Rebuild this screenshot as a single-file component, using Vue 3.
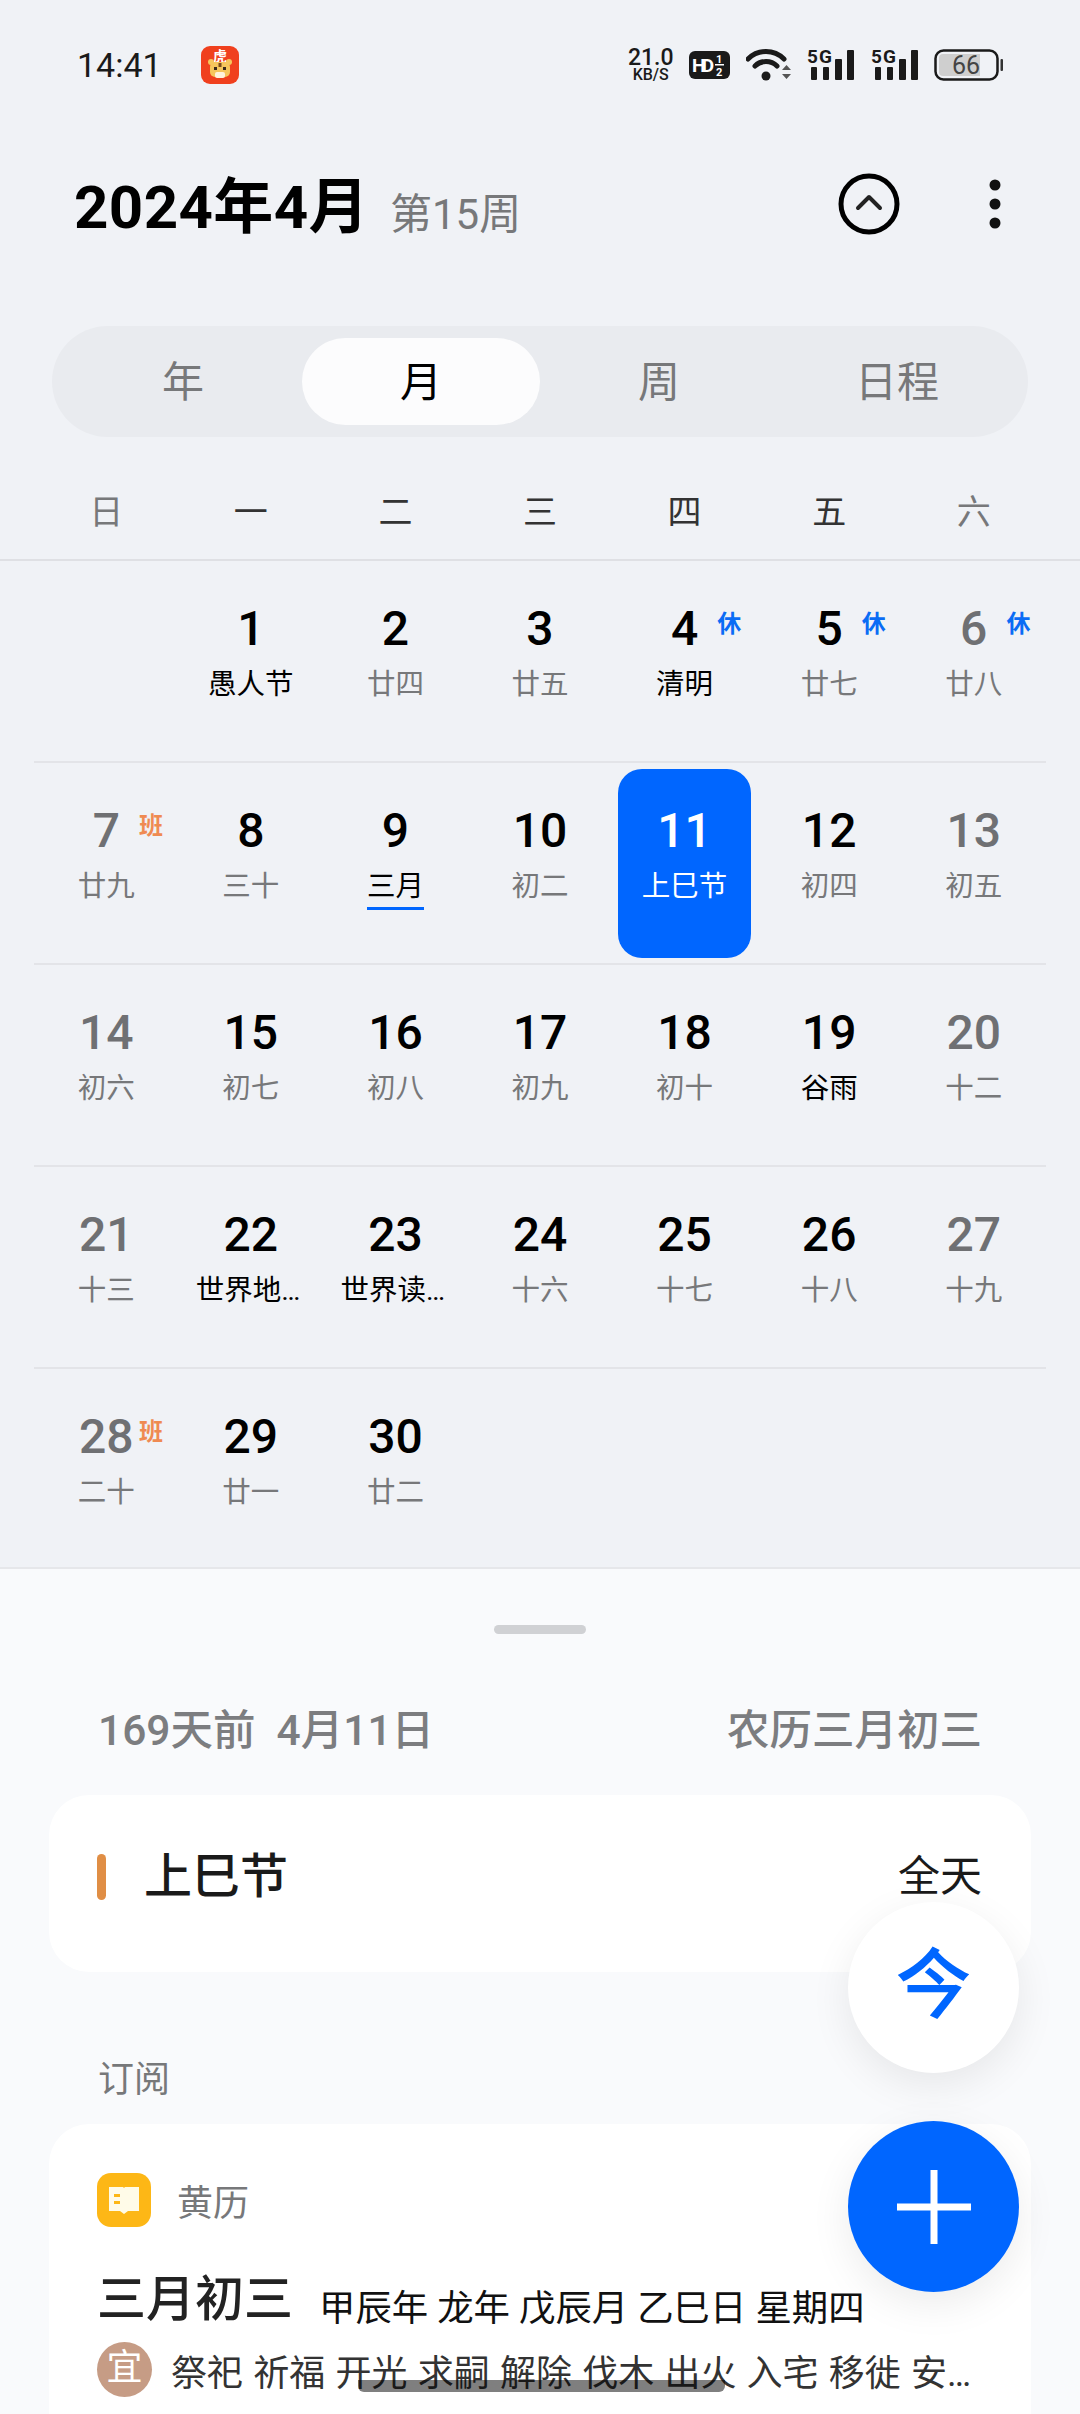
<script setup>
import { computed } from "vue";

const tabs = ["年", "月", "周", "日程"];
const weekdays = ["日", "一", "二", "三", "四", "五", "六"];

// lunar labels and marks for April 2024, the first cell is a blank Sunday
const days = [
  null,
  { d: 1, l: "愚人节", fest: true },
  { d: 2, l: "廿四" },
  { d: 3, l: "廿五" },
  { d: 4, l: "清明", fest: true, tag: "休" },
  { d: 5, l: "廿七", tag: "休" },
  { d: 6, l: "廿八", tag: "休" },
  { d: 7, l: "廿九", tag: "班" },
  { d: 8, l: "三十" },
  { d: 9, l: "三月", line: true, fest: true },
  { d: 10, l: "初二" },
  { d: 11, l: "上巳节", today: true },
  { d: 12, l: "初四" },
  { d: 13, l: "初五" },
  { d: 14, l: "初六" },
  { d: 15, l: "初七" },
  { d: 16, l: "初八" },
  { d: 17, l: "初九" },
  { d: 18, l: "初十" },
  { d: 19, l: "谷雨", fest: true },
  { d: 20, l: "十二" },
  { d: 21, l: "十三" },
  { d: 22, l: "世界地球日", fest: true },
  { d: 23, l: "世界读书日", fest: true },
  { d: 24, l: "十六" },
  { d: 25, l: "十七" },
  { d: 26, l: "十八" },
  { d: 27, l: "十九" },
  { d: 28, l: "二十", tag: "班" },
  { d: 29, l: "廿一" },
  { d: 30, l: "廿二" },
];

const rows = computed(() => {
  const out = [];
  for (let i = 0; i < days.length; i += 7) {
    const row = days.slice(i, i + 7);
    while (row.length < 7) row.push(null);
    out.push(row);
  }
  return out;
});
</script>

<template>
  <div class="page">
    <div class="status">
      <span class="time">14:41</span>
      <svg class="tiger" width="38" height="38" viewBox="0 0 38 38">
        <rect width="38" height="38" rx="9" fill="#f0401e" />
        <text x="19" y="15" text-anchor="middle" font-size="14" font-weight="700" fill="#fff" font-family="'Noto Sans CJK SC'">虎</text>
        <rect x="9" y="16" width="20" height="15" rx="5" fill="#f6c65c" />
        <circle cx="10" cy="16" r="3" fill="#f6c65c" />
        <circle cx="28" cy="16" r="3" fill="#f6c65c" />
        <rect x="13" y="21" width="3" height="3" fill="#3b2a1a" />
        <rect x="22" y="21" width="3" height="3" fill="#3b2a1a" />
        <rect x="17.5" y="17" width="3" height="4" fill="#7a4a1c" />
        <rect x="14" y="26" width="10" height="6" rx="2" fill="#fff3dc" />
      </svg>
      <div class="status-right">
        <div class="speed">
          <span class="speed-num">21.0</span>
          <span class="speed-unit">KB/S</span>
        </div>
        <svg width="41" height="28" viewBox="0 0 41 28">
          <rect width="41" height="28" rx="6" fill="#1a1a1a" />
          <text x="3" y="21" font-size="19" font-weight="700" fill="#fff" font-family="Roboto" textLength="22">HD</text>
          <text x="27" y="12" font-size="11" font-weight="700" fill="#fff" font-family="Roboto">1</text>
          <text x="27" y="25" font-size="11" font-weight="700" fill="#fff" font-family="Roboto">2</text>
          <rect x="26" y="13" width="9" height="1.5" fill="#fff" />
        </svg>
        <svg width="46" height="34" viewBox="0 0 46 34">
          <path d="M2 11C12 1 28 1 38 11" fill="none" stroke="#1a1a1a" stroke-width="5" stroke-linecap="round" />
          <path d="M9 18C15 12 25 12 31 18" fill="none" stroke="#1a1a1a" stroke-width="5" stroke-linecap="round" />
          <circle cx="20" cy="28" r="4.5" fill="#1a1a1a" />
          <path d="M36 22l4.500-5 4.500 5zM36 26l4.500 5 4.500-5z" fill="#555" />
        </svg>
        <svg v-for="n in 2" :key="n" width="48" height="40" viewBox="0 -3 48 40">
          <text x="0" y="15" font-size="19" font-weight="700" fill="#1a1a1a" font-family="Roboto" textLength="25">5G</text>
          <rect x="4" y="19" width="6" height="13" rx="1" fill="#1a1a1a" />
          <rect x="16" y="19" width="6" height="13" rx="1" fill="#1a1a1a" />
          <rect x="28" y="11" width="7" height="21" rx="1" fill="#1a1a1a" />
          <rect x="40" y="2" width="7" height="30" rx="1" fill="#1a1a1a" />
        </svg>
        <svg width="70" height="32" viewBox="0 0 70 32">
          <rect x="1.500" y="1.500" width="62" height="29" rx="8" fill="none" stroke="#1a1a1a" stroke-width="2.500" />
          <path d="M9 5h37v22H9a4 4 0 0 1-4-4V9a4 4 0 0 1 4-4z" fill="#cfcfcf" />
          <rect x="66.500" y="10" width="2.500" height="12" rx="1" fill="#333" />
          <text x="32" y="25" text-anchor="middle" font-size="25" fill="#444" font-family="Roboto">66</text>
        </svg>
      </div>
    </div>

    <div class="head">
      <span class="title">2024年4月</span>
      <span class="week">第15周</span>
      <svg class="up" width="62" height="62" viewBox="0 0 62 62">
        <circle cx="31" cy="31" r="28" fill="none" stroke="#000" stroke-width="5" />
        <path d="M20 35l11-11 11 11" fill="none" stroke="#222" stroke-width="4" stroke-linecap="round" stroke-linejoin="round" />
      </svg>
      <svg class="more" width="12" height="50" viewBox="0 0 12 50">
        <circle cx="6" cy="6" r="5.500" fill="#111" />
        <circle cx="6" cy="25" r="5.500" fill="#111" />
        <circle cx="6" cy="44" r="5.500" fill="#111" />
      </svg>
    </div>

    <div class="tabs">
      <div v-for="t in tabs" :key="t" class="tab" :class="{ on: t === '月' }">{{ t }}</div>
    </div>

    <div class="weekdays">
      <span v-for="(w, i) in weekdays" :key="w" :class="{ off: i === 0 || i === 6 }">{{ w }}</span>
    </div>

    <div class="grid">
      <div v-for="(row, r) in rows" :key="r" class="row" :class="{ last: r === rows.length - 1 }">
        <div v-for="(c, i) in row" :key="i" class="cell">
          <div v-if="c" class="day" :class="{ today: c.today, off: i === 0 || i === 6 }">
            <span class="num">{{ c.d }}</span>
            <span class="lunar" :class="{ fest: c.fest }">{{ c.l }}</span>
            <i v-if="c.line" class="mark"></i>
            <b v-if="c.tag" class="tag" :class="{ work: c.tag === '班' }">{{ c.tag }}</b>
          </div>
        </div>
      </div>
    </div>

    <div class="sheet">
      <div class="handle"></div>
      <div class="date-row">
        <span>169天前&nbsp; 4月11日</span>
        <span>农历三月初三</span>
      </div>
      <div class="card event">
        <i class="bar"></i>
        <span class="event-name">上巳节</span>
        <span class="event-time">全天</span>
      </div>
      <div class="sub-title">订阅</div>
      <div class="card almanac">
        <div class="alm-head">
          <svg width="54" height="54" viewBox="0 0 54 54">
            <rect width="54" height="54" rx="14" fill="#fdb716" />
            <path d="M12 14h14l1 1 1-1h14v24H31l-4 3-4-3H12z" fill="#fffbe8" />
            <rect x="17" y="21" width="6" height="3" fill="#fdb716" />
            <rect x="17" y="28" width="6" height="3" fill="#fdb716" />
          </svg>
          <span>黄历</span>
        </div>
        <div class="alm-title">
          <span class="alm-date">三月初三</span>
          <span class="alm-info">甲辰年 龙年 戊辰月 乙巳日 星期四</span>
        </div>
        <div class="alm-good">
          <span class="good-badge">宜</span>
          <span class="good-text">祭祀 祈福 开光 求嗣 解除 伐木 出火 入宅 移徙 安床 栽种</span>
        </div>
      </div>
    </div>

    <div class="fab fab-today">今</div>
    <div class="fab fab-add">
      <svg width="76" height="76" viewBox="0 0 76 76">
        <rect x="34.500" y="1" width="7" height="74" fill="#fff" />
        <rect x="1" y="34.500" width="74" height="7" fill="#fff" />
      </svg>
    </div>
    <div class="nav-pill"></div>
  </div>
</template>

<style>
html,
body {
  margin: 0;
  background: #f0f2f6;
}
</style>

<style scoped>
.page {
  position: relative;
  width: 1080px;
  height: 2414px;
  overflow: hidden;
  background: #f0f2f6;
  color: #000;
  font-family: Roboto, "Noto Sans CJK SC", sans-serif;
}

.status {
  display: flex;
  align-items: center;
  height: 130px;
  padding: 0 76px 0 77px;
  box-sizing: border-box;
}

.time {
  font-size: 34px;
  color: #1a1a1a;
  width: 124px;
}

.status-right {
  display: flex;
  align-items: center;
  gap: 15.5px;
  margin-left: auto;
}

.speed {
  display: flex;
  flex-direction: column;
  align-items: center;
  color: #1a1a1a;
  font-weight: 500;
}

.speed-num {
  font-size: 23px;
  line-height: 19px;
}

.speed-unit {
  font-size: 16px;
  line-height: 16px;
}

.head {
  display: flex;
  align-items: center;
  height: 148px;
  padding: 0 79px 0 74px;
}

.title {
  font-size: 60px;
  font-weight: 700;
  letter-spacing: 0.4px;
  margin-top: -6px;
}

.week {
  font-size: 42px;
  color: #77787a;
  margin-left: 21px;
  margin-top: 12px;
}

.up {
  margin-left: auto;
  margin-right: 89px;
}

.tabs {
  display: flex;
  align-items: center;
  height: 111px;
  margin: 48px 52px 0;
  padding: 0 12px;
  border-radius: 56px;
  background: #e9ebef;
}

.tab {
  flex: 1;
  height: 87px;
  line-height: 90px;
  text-align: center;
  font-size: 42px;
  color: #77787a;
  border-radius: 44px;
}

.tab.on {
  background: #fcfcfd;
  color: #000;
}

.weekdays {
  display: grid;
  grid-template-columns: repeat(7, 1fr);
  padding: 28px 34px 0;
  height: 94px;
  border-bottom: 2px solid #dfe0e4;
  box-sizing: content-box;
  text-align: center;
  font-size: 34px;
  line-height: 94px;
  color: #333;
}

.weekdays .off {
  color: #77787a;
}

.grid {
  padding: 0 34px;
}

.row {
  display: grid;
  grid-template-columns: repeat(7, 1fr);
  height: 200px;
  border-bottom: 2px solid #e3e4e8;
}

.row.last {
  height: 198px;
  border-bottom: none;
}

.cell {
  padding: 6px;
  min-width: 0;
}

.day {
  position: relative;
  display: flex;
  flex-direction: column;
  align-items: center;
  height: 189px;
  padding-top: 34px;
  box-sizing: border-box;
  border-radius: 24px;
}

.num {
  font-size: 48px;
  font-weight: 500;
  line-height: 56px;
}

.lunar {
  margin-top: 6px;
  font-size: 28.5px;
  line-height: 44px;
  max-width: 110px;
  color: #77787a;
  white-space: nowrap;
  overflow: hidden;
  text-overflow: ellipsis;
}

.lunar.fest {
  color: #000;
}

.off .num {
  color: #6f7073;
}

.today {
  background: #0066ff;
}

.today .num,
.today .lunar {
  color: #fff;
}

.mark {
  width: 57px;
  height: 3px;
  margin-top: -2px;
  background: #0066ff;
}

.tag {
  position: absolute;
  top: 42px;
  left: 99px;
  font-size: 24px;
  line-height: 30px;
  color: #0a6cf5;
}

.tag.work {
  color: #ef8a52;
}

.sheet {
  height: 847px;
  border-top: 2px solid #e6e7ea;
  box-sizing: border-box;
  background: #f9fafc;
  padding: 56px 49px 0;
}

.handle {
  width: 92px;
  height: 9px;
  margin: 0 auto;
  border-radius: 5px;
  background: #d0d1d4;
}

.date-row {
  display: flex;
  justify-content: space-between;
  padding: 0 49px;
  margin-top: 67px;
  height: 60px;
  line-height: 60px;
  font-size: 42.5px;
  font-weight: 500;
  color: #7c7d80;
}

.card {
  background: #fff;
  border-radius: 40px;
}

.event {
  display: flex;
  align-items: flex-start;
  height: 177px;
  margin-top: 34px;
  padding: 59px 49px 0 48px;
  box-sizing: border-box;
}

.bar {
  width: 9px;
  height: 46px;
  border-radius: 5px;
  background: #e08e45;
}

.event-name {
  margin-left: 38px;
  font-size: 48px;
  font-weight: 500;
  line-height: 46px;
  color: #1a1a1a;
}

.event-time {
  margin-left: auto;
  font-size: 42px;
  line-height: 46px;
  color: #1a1a1a;
}

.sub-title {
  padding-left: 49px;
  margin-top: 83px;
  font-size: 36px;
  line-height: 50px;
  color: #77787a;
}

.almanac {
  height: 400px;
  margin-top: 19px;
  padding: 49px 48px 0;
}

.alm-head {
  display: flex;
  align-items: center;
  gap: 26px;
  font-size: 36px;
  color: #77787a;
}

.alm-title {
  display: flex;
  align-items: flex-start;
  margin-top: 40px;
  color: #222;
}

.alm-date {
  font-size: 49px;
  font-weight: 500;
  line-height: 66px;
}

.alm-info {
  margin-left: 26px;
  margin-top: 17px;
  font-size: 36.4px;
  line-height: 50px;
  color: #111;
}

.alm-good {
  display: flex;
  align-items: center;
  margin-top: 8px;
}

.good-badge {
  flex: none;
  width: 55px;
  height: 55px;
  line-height: 53px;
  text-align: center;
  border-radius: 50%;
  background: #c69c85;
  color: #fff;
  font-size: 36px;
}

.good-text {
  width: 808px;
  margin-left: 19px;
  font-size: 36px;
  word-spacing: 1.3px;
  color: #333;
  white-space: nowrap;
  overflow: hidden;
  text-overflow: ellipsis;
}

.fab {
  position: absolute;
  left: 848px;
  width: 171px;
  height: 171px;
  border-radius: 50%;
  display: flex;
  align-items: center;
  justify-content: center;
  box-shadow: 0 12px 40px rgba(0, 0, 0, 0.08);
}

.fab-today {
  top: 1902px;
  background: #fff;
  color: #0066ff;
  font-size: 76px;
  font-weight: 500;
  line-height: 1;
  padding-bottom: 4px;
  box-sizing: border-box;
}

.fab-add {
  top: 2121px;
  background: #0066ff;
}

.nav-pill {
  position: absolute;
  left: 358px;
  top: 2380px;
  width: 367px;
  height: 12px;
  border-radius: 0 0 6px 6px;
  background: rgba(0, 0, 0, 0.5);
}
</style>
